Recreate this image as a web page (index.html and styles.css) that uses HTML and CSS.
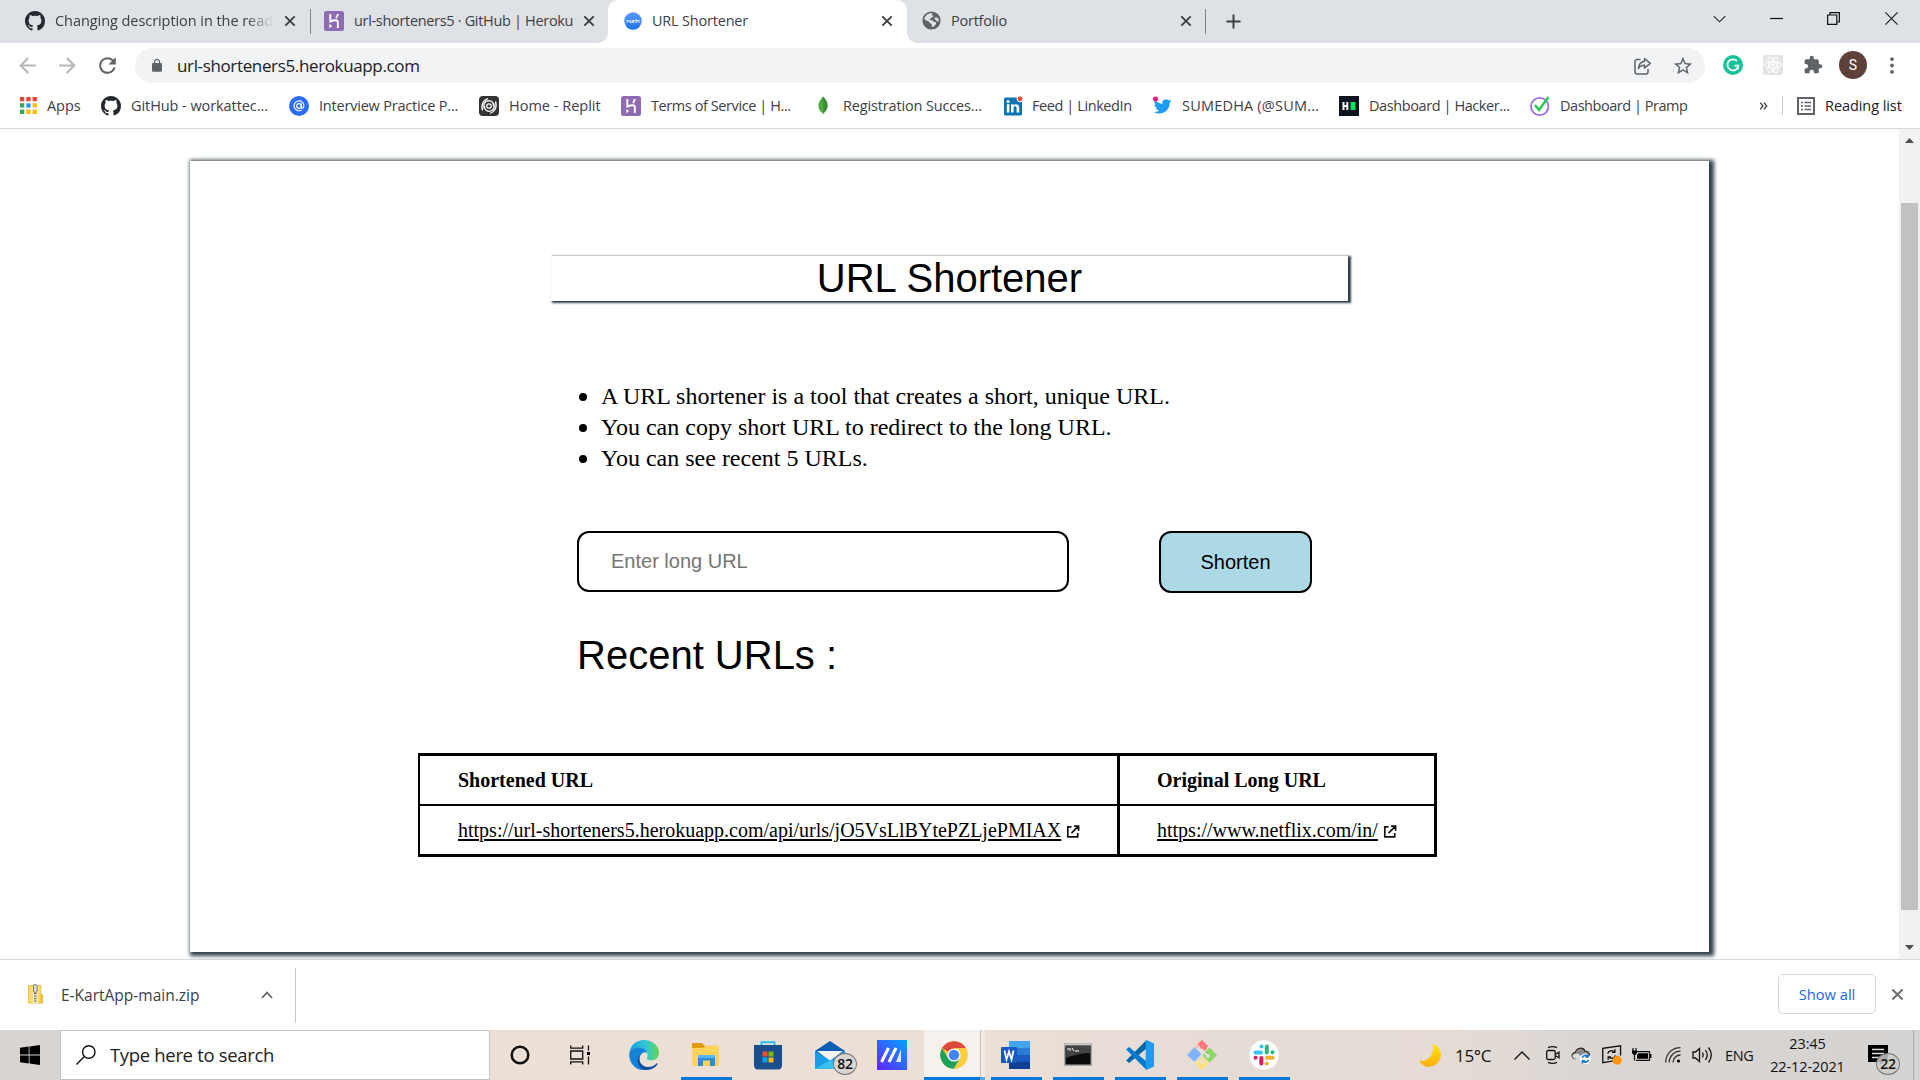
FILE: index.html
```html
<!DOCTYPE html>
<html lang="en">
<head>
<meta charset="utf-8">
<title>URL Shortener</title>
<link rel="stylesheet" href="styles.css">
</head>
<body>
<svg class="defs" aria-hidden="true">
  <symbol id="github" viewBox="0 0 16 16"><path fill="#24292f" d="M8 0C3.58 0 0 3.58 0 8c0 3.54 2.29 6.53 5.47 7.59.4.07.55-.17.55-.38 0-.19-.01-.82-.01-1.49-2.01.37-2.53-.49-2.69-.94-.09-.23-.48-.94-.82-1.13-.28-.15-.68-.52-.01-.53.63-.01 1.08.58 1.23.82.72 1.21 1.87.87 2.33.66.07-.52.28-.87.51-1.07-1.78-.2-3.64-.89-3.64-3.95 0-.87.31-1.59.82-2.15-.08-.2-.36-1.02.08-2.12 0 0 .67-.21 2.2.82.64-.18 1.32-.27 2-.27s1.36.09 2 .27c1.53-1.04 2.2-.82 2.2-.82.44 1.1.16 1.92.08 2.12.51.56.82 1.27.82 2.15 0 3.07-1.87 3.75-3.65 3.95.29.25.54.73.54 1.48 0 1.07-.01 1.93-.01 2.2 0 .21.15.46.55.38A8.01 8.01 0 0 0 16 8c0-4.42-3.58-8-8-8z"/></symbol>
  <symbol id="heroku" viewBox="0 0 20 20"><rect width="20" height="20" rx="2.5" fill="#8f6bb3"/><path fill="none" stroke="#fff" stroke-width="1.9" d="M6.3 3v7.6c2-.9 3.8-1.3 5.500-1.300 1.500 0 2 .8 2 2V17M13.800 3c-.1 1.500-.8 2.900-1.900 4"/><path fill="#fff" d="M5.400 13l2.800 2.100-2.800 2.100z"/></symbol>
  <symbol id="x" viewBox="0 0 12 12"><path fill="none" stroke="#3c4043" stroke-width="1.900" d="M1.300 1.300l9.400 9.400M10.700 1.300l-9.400 9.400"/></symbol>
  <symbol id="outbound" viewBox="0 0 13 13"><path fill="none" stroke="#111" stroke-width="1.700" d="M5 1.800H1.300v10h9.900V8M5 8.200l6.200-6.300M7.600 1.100h4.500v4.700"/></symbol>
</svg>

<div class="screen">
  <header class="tabs">
    <div class="tab t1"><svg class="i20"><use href="#github"/></svg><span class="label fade">Changing description in the read</span><svg class="i12"><use href="#x"/></svg></div>
    <i class="sep"></i>
    <div class="tab t2"><svg class="i20"><use href="#heroku"/></svg><span class="label ls32">url-shorteners5 · GitHub | Heroku</span><svg class="i12"><use href="#x"/></svg></div>
    <div class="tab t3"><svg class="i18" viewBox="0 0 18 18"><defs><linearGradient id="cg" x2="0" y2="1"><stop stop-color="#5b9bf8"/><stop offset="1" stop-color="#1a73e8"/></linearGradient></defs><circle cx="9" cy="9" r="8.700" fill="url(#cg)"/><text x="9" y="11" text-anchor="middle" class="curlc">&gt;url&lt;</text></svg><span class="label ls20">URL Shortener</span><svg class="i12"><use href="#x"/></svg></div>
    <div class="tab t4"><svg class="i19" viewBox="0 0 20 20"><circle cx="10" cy="10" r="9.600" fill="#5f6368"/><path fill="#dee1e6" d="M11 2.200c-1.200 1.500-1 2.500.8 2.700.2 1.300-1.300 1.200-1.800 2.300-.3 1-1.900.6-2 1.800.8 1.300 3.800.3 4.300 2.300 1 .4 2.300.1 2.700 1.300-.4 1.900-2 3.500-4.300 4.600-.9-1.300.3-2.600-1-3.700-1.800-.4-1.600-2.500-3.400-2.700C4.500 10.400 3.500 9 2.300 8.800 3.200 5 6.700 2 11 2.200zM13 7.200c1-.9 3.400-.3 4.200.8.4 1.300.4 2.500 0 3.600-1.800-.9-3.900-2-4.200-4.400z"/></svg><span class="label ls24">Portfolio</span><svg class="i12"><use href="#x"/></svg></div>
    <i class="sep"></i>
    <svg class="plus" viewBox="0 0 16 16"><path stroke="#3c4043" stroke-width="2.100" d="M8 .5v15M.5 8h15"/></svg>
    <div class="winctl">
      <svg class="w1" viewBox="0 0 14 8"><path d="M.8.8L7 7 13.200.8" fill="none" stroke="#222" stroke-width="1.200"/></svg>
      <svg class="w2" viewBox="0 0 13 13"><path d="M0 6.500h13" stroke="#111" stroke-width="1.200"/></svg>
      <svg class="w3" viewBox="0 0 13 13"><path d="M.6 3h9.200v9.400H.6zM3 3V.6h9.400V10H9.900" fill="none" stroke="#111" stroke-width="1.200"/></svg>
      <svg class="w4" viewBox="0 0 13 13"><path d="M.4.4l12.200 12.200M12.600.4L.4 12.600" stroke="#222" stroke-width="1.200"/></svg>
    </div>
  </header>

  <div class="toolbar">
    <svg class="nav back" viewBox="0 0 24 24"><path fill="#b6b8bb" d="M20 11H7.830l5.590-5.590L12 4l-8 8 8 8 1.410-1.410L7.830 13H20z"/></svg>
    <svg class="nav fwd" viewBox="0 0 24 24"><path fill="#b6b8bb" d="M4 11h12.170l-5.590-5.590L12 4l8 8-8 8-1.410-1.410L16.170 13H4z"/></svg>
    <svg class="nav reload" viewBox="0 0 24 24"><path fill="#5f6368" d="M17.650 6.350A7.958 7.958 0 0 0 12 4c-4.420 0-7.990 3.580-7.990 8s3.570 8 7.990 8c3.730 0 6.840-2.550 7.730-6h-2.080A5.990 5.990 0 0 1 12 18c-3.310 0-6-2.690-6-6s2.690-6 6-6c1.660 0 3.140.69 4.220 1.780L13 11h7V4z"/></svg>
    <div class="omnibox">
      <svg class="lock" viewBox="0 0 24 24"><path fill="#5f6368" d="M18 8h-1V6c0-2.760-2.240-5-5-5S7 3.240 7 6v2H6c-1.100 0-2 .9-2 2v10c0 1.100.9 2 2 2h12c1.100 0 2-.9 2-2V10c0-1.100-.9-2-2-2zM9 8V6c0-1.660 1.340-3 3-3s3 1.340 3 3v2z"/></svg>
      <span class="url">url-shorteners5.herokuapp.com</span>
      <svg class="share" viewBox="0 0 18 18"><path fill="none" stroke="#5f6368" stroke-width="1.500" stroke-linejoin="round" d="M7 2.500H3.500a2 2 0 0 0-2 2V15a2 2 0 0 0 2 2h9a2 2 0 0 0 2-2v-3M11 1.500l5.800 4.800-5.800 4.800V8.300c-3 0-4.800.9-6 3.200.2-4 2.200-6.700 6-7.200z"/></svg>
      <svg class="star" viewBox="0 0 24 24"><path fill="#5f6368" d="M22 9.240l-7.190-.62L12 2 9.190 8.630 2 9.240l5.460 4.730L5.820 21 12 17.270 18.180 21l-1.630-7.030zM12 15.400l-3.760 2.270 1-4.280-3.320-2.880 4.380-.38L12 6.100l1.710 4.040 4.380.38-3.320 2.880 1 4.280z"/></svg>
    </div>
    <svg class="gram" viewBox="0 0 20 20"><circle cx="10" cy="10" r="10" fill="#15c39a"/><path fill="none" stroke="#fff" stroke-width="1.800" d="M14 6.200a5.500 5.500 0 1 0 1.400 4.500h-4M14.900 10.700v3.800"/></svg>
    <svg class="react" viewBox="0 0 20 20"><rect width="20" height="20" rx="1.500" fill="#e4e4e4"/><g fill="none" stroke="#fff" stroke-width="1.100"><ellipse cx="10" cy="10" rx="8.500" ry="3.300"/><ellipse cx="10" cy="10" rx="8.500" ry="3.300" transform="rotate(60 10 10)"/><ellipse cx="10" cy="10" rx="8.500" ry="3.300" transform="rotate(120 10 10)"/></g><circle cx="10" cy="10" r="1.700" fill="#fff"/></svg>
    <svg class="puzzle" viewBox="0 0 24 24"><path fill="#5f6368" d="M20.500 11H19V7c0-1.100-.9-2-2-2h-4V3.500C13 2.120 11.880 1 10.500 1S8 2.120 8 3.500V5H4c-1.100 0-1.990.9-1.990 2v3.800H3.500c1.490 0 2.700 1.210 2.700 2.700s-1.210 2.700-2.700 2.700H2V20c0 1.100.9 2 2 2h3.800v-1.500c0-1.490 1.210-2.700 2.700-2.700s2.700 1.210 2.700 2.700V22H17c1.100 0 2-.9 2-2v-4h1.500c1.380 0 2.500-1.120 2.500-2.500S21.880 11 20.500 11z"/></svg>
    <span class="avatar">S</span>
    <svg class="dots" viewBox="0 0 4 18"><g fill="#5f6368"><circle cx="2" cy="2.200" r="2"/><circle cx="2" cy="9" r="2"/><circle cx="2" cy="15.800" r="2"/></g></svg>
  </div>

  <nav class="bookmarks">
    <div class="bm b1"><svg class="i17" viewBox="0 0 17 17"><g fill="#ea4335"><path d="M0 0h4.300v4.300H0zM6.300 0h4.300v4.300H6.300zM12.600 0h4.300v4.300h-4.300z"/></g><path fill="#34a853" d="M0 6.300h4.300v4.300H0zM0 12.600h4.300v4.300H0z"/><path fill="#2a93f4" d="M6.300 6.300h4.300v4.300H6.300z"/><path fill="#fbbc04" d="M6.300 12.600h4.300v4.300H6.300zM12.600 6.300h4.300v4.300h-4.300zM12.600 12.600h4.300v4.300h-4.300z"/></svg><span class="ls08">Apps</span></div>
    <div class="bm b2"><svg class="i20"><use href="#github"/></svg><span class="ls08">GitHub - workattec...</span></div>
    <div class="bm b3"><svg class="i20" viewBox="0 0 20 20"><circle cx="10" cy="10" r="10" fill="#2a6df4"/><circle cx="10" cy="10" r="2.300" fill="none" stroke="#fff" stroke-width="1.200"/><path fill="none" stroke="#fff" stroke-width="1.100" d="M12.500 7.500l-.3 3.700c0 1.600 2.700 1.500 2.700-1.700A4.900 4.900 0 1 0 12.600 14"/></svg><span class="ls20">Interview Practice P...</span></div>
    <div class="bm b4"><svg class="i20" viewBox="0 0 20 20"><rect width="20" height="20" rx="4" fill="#333"/><g fill="none" stroke="#fff"><circle cx="10" cy="10" r="2.200" stroke-width="1.300"/><path stroke-width="1.300" d="M5.500 13c-2-4 .3-8.200 4.200-8.400 3.500 0 5.200 2.800 4.700 5.600M14.500 7c2 4-.3 8.200-4.200 8.400-3.500 0-5.200-2.800-4.700-5.600M3.500 14.500C1.500 8 5 3.500 9 2.600M16.500 5.500c2 6.500-1.500 11-5.500 11.900"/></g></svg><span>Home - Replit</span></div>
    <div class="bm b5"><svg class="i20"><use href="#heroku"/></svg><span class="ls40">Terms of Service | H...</span></div>
    <div class="bm b6"><svg class="i20" viewBox="0 0 20 20"><path fill="#4faa41" d="M10 .5c6 6.200 6.200 12 .4 16.800L10.200 19h-.5l-.2-1.700C3.800 12.500 4.300 6.500 10 .5z"/><path fill="#3b8e38" d="M10 .5c6 6.200 6.200 12 .4 16.800z"/></svg><span class="ls16">Registration Succes...</span></div>
    <div class="bm b7"><svg class="i20" viewBox="0 0 20 20"><rect y="1.500" width="18" height="18" rx="1.500" fill="#0a73b1"/><g fill="#fff"><path d="M2.800 8.300h2.600v8.300H2.800zM7 8.300h2.500v1.200c1.600-2.300 5.700-1.700 5.700 2.100v5h-2.600v-4.400c0-2.600-3-2.400-3 0v4.400H7z"/><circle cx="4.100" cy="5.600" r="1.500"/></g><circle cx="16" cy="2.800" r="3" fill="#f5483b" stroke="#fff"/></svg><span class="ls40">Feed | LinkedIn</span></div>
    <div class="bm b8"><svg class="i20" viewBox="0 0 24 24"><path fill="#1d9bf0" transform="translate(1 2) scale(.88)" d="M23.950 4.570a10 10 0 0 1-2.820.77 4.960 4.960 0 0 0 2.160-2.720c-.95.56-2 .96-3.130 1.190a4.920 4.920 0 0 0-8.380 4.480C7.690 8.100 4.070 6.130 1.640 3.160a4.930 4.930 0 0 0 1.520 6.570 4.900 4.900 0 0 1-2.230-.61v.06a4.920 4.920 0 0 0 3.950 4.830 5 5 0 0 1-2.210.08 4.940 4.940 0 0 0 4.600 3.420A9.870 9.870 0 0 1 0 19.540a13.990 13.990 0 0 0 7.560 2.210c9.050 0 14-7.500 14-13.980 0-.21 0-.42-.02-.63a9.940 9.940 0 0 0 2.410-2.570z"/><circle cx="3" cy="3.500" r="3" fill="#f91880"/></svg><span class="ls-w">SUMEDHA (@SUM...</span></div>
    <div class="bm b9"><svg class="i20" viewBox="0 0 20 20"><path fill="#0e141e" d="M0 0h20v20H0z"/><path fill="#fff" d="M3.500 6h2v3h1.800V6h2v8h-2v-3H5.500v3h-2z"/><path fill="#05e35e" d="M11.500 6h5v8h-5z"/></svg><span class="ls40">Dashboard | Hacker...</span></div>
    <div class="bm b10"><svg class="i20" viewBox="0 0 20 20"><circle cx="9.700" cy="10.500" r="8.700" fill="none" stroke="#9b6fe0" stroke-width="1.800"/><path fill="none" stroke="#22cc55" stroke-width="2.500" d="M5 9l4 5 9.500-13"/></svg><span class="ls46">Dashboard | Pramp</span></div>
    <svg class="more" viewBox="0 0 8 8"><path fill="none" stroke="#3c4043" stroke-width="1.300" d="M.7.7L3.500 4 .7 7.300M4.400.7L7.200 4 4.400 7.300"/></svg>
    <i class="bsep"></i>
    <svg class="rlist" viewBox="0 0 18 18"><rect x="1" y="1" width="16" height="16" fill="none" stroke="#5f6368" stroke-width="2"/><path stroke="#5f6368" stroke-width="1.500" d="M4 5.500h2M7.500 5.500H14M4 9h2M7.500 9H14M4 12.500h2M7.500 12.500H14"/></svg>
    <span class="ls08 rl">Reading list</span>
  </nav>

  <div class="viewport">
    <main class="page">
      <section class="card">
        <h1 class="title">URL Shortener</h1>
        <ul class="notes">
          <li>A URL shortener is a tool that creates a short, unique URL.</li>
          <li>You can copy short URL to redirect to the long URL.</li>
          <li>You can see recent 5 URLs.</li>
        </ul>
        <form class="form">
          <input class="field" type="text" placeholder="Enter long URL">
          <button class="submit" type="button">Shorten</button>
        </form>
        <h2 class="recent">Recent URLs :</h2>
        <table class="urls">
          <thead><tr><th class="c1">Shortened URL</th><th class="c2">Original Long URL</th></tr></thead>
          <tbody><tr><td class="c1"><a class="link">https://url-shorteners5.herokuapp.com/api/urls/jO5VsLlBYtePZLjePMIAX</a><svg class="out"><use href="#outbound"/></svg></td><td class="c2"><a class="link">https://www.netflix.com/in/</a><svg class="out"><use href="#outbound"/></svg></td></tr></tbody>
        </table>
      </section>
    </main>
    <aside class="scrollbar">
      <svg class="arr" viewBox="0 0 9 5"><path fill="#505050" d="M0 5L4.500 0 9 5z"/></svg>
      <div class="thumb"></div>
      <svg class="arr" viewBox="0 0 9 5"><path fill="#505050" d="M0 0l4.500 5L9 0z"/></svg>
    </aside>
  </div>

  <div class="downloads">
    <div class="dl">
      <svg class="zip" viewBox="0 0 15 20"><path fill="#e8bb3a" d="M13 10h2v9.500h-4z"/><path fill="#fbdb6a" stroke="#e8c047" d="M.5 1.500h12.300v17.500H.5z"/><path fill="#fff" d="M4.800 1h5v18h-5z" opacity=".6"/><path stroke="#777" stroke-width="2.600" stroke-dasharray="1.300 1.200" d="M7.300 9v10"/><rect x="5.500" y=".5" width="3.600" height="8" rx="1.500" fill="#ddd" stroke="#777"/></svg>
      <span class="dlname">E-KartApp-main.zip</span>
      <svg class="chev" viewBox="0 0 12 8"><path fill="none" stroke="#5f6368" stroke-width="1.800" d="M1 7l5-5.500L11 7"/></svg>
    </div>
    <button class="showall">Show all</button>
    <svg class="dlx"><use href="#x"/></svg>
  </div>

  <footer class="taskbar">
    <div class="start"><svg class="i20" viewBox="0 0 20 20"><path d="M0 2.800l8.700-1.200v8H0zM9.500 1.500L20 0v9.600H9.500zM0 10.500h8.700v8L0 17.300zM9.500 10.500H20V20L9.500 18.500z"/></svg></div>
    <div class="search"><svg class="i20" viewBox="0 0 20 20"><g fill="none" stroke="#111" stroke-width="1.400"><circle cx="12.800" cy="7" r="6.200"/><path d="M8.300 11.500L.5 19.500"/></g></svg><span class="stext">Type here to search</span></div>
    <div class="task cort"><svg class="i20" viewBox="0 0 20 20"><circle cx="10" cy="10" r="8.300" fill="none" stroke="#111" stroke-width="2.500"/></svg></div>
    <div class="task tview"><svg class="i20" viewBox="0 0 20 20"><g fill="none" stroke="#111" stroke-width="1.300"><path d="M.7 6h12v8h-12zM.7.500v2.600h12V.500M.7 19.500v-2.600h12v2.600M18.500.500v5M18.500 11.500v8"/></g><path d="M17 7h3v3h-3z"/></svg></div>
    <div class="task"><svg class="i30" viewBox="0 0 30 30"><defs><linearGradient id="e1" x2="1"><stop stop-color="#1b9de2"/><stop offset=".55" stop-color="#30c6d6"/><stop offset="1" stop-color="#62d64f"/></linearGradient></defs><path fill="url(#e1)" d="M.3 13C1.500 5 7.500 0 15 0c8.500 0 15 6 15 12.500 0 5-3.500 7.800-7.500 7.800-3.500 0-5.500-1.300-4.500-2.600C20 15 17.500 10.500 13 9.500c-5-1-10 .5-12.700 3.500z"/><path fill="#1482d8" d="M.2 14c1-4.500 6.200-7.300 12-6 3 .6 5.200 2.500 5.800 4.500-2.500-1-5.200.2-6.700 3-2.200 4.500.2 10 6.200 14.200C7.500 32 .2 24 .2 14z"/><path fill="#0c4fa0" d="M11.500 14.500c-3.500 5 .5 12.500 7.500 12.500 3.500 0 6-1 8.200-3.300 1-.8 1.600 0 1 1-2.500 3.500-7 5.600-12.200 5.200C8.500 28 6 19.500 11.500 14.500z"/></svg></div>
    <div class="task on"><svg class="i30" viewBox="0 0 30 30"><path fill="#e19c0b" d="M1 3h10l3 3v5H1z"/><path fill="#ffd35c" d="M1 8h11l3-2.500h13V26H1z"/><path fill="#2f8bd8" d="M7 15h17v11h-5v-5.500h-7V26H7z"/><path fill="#5cb5ef" d="M7 15h17v3H7z"/></svg></div>
    <div class="task"><svg class="i30" viewBox="0 0 30 30"><path fill="none" stroke="#24bff2" stroke-width="1.900" d="M8.500 7V2.200h13V7"/><path fill="#1a4f8e" d="M1 5h28v20c0 3-1.500 4.500-4 4.500H5c-2.500 0-4-1.500-4-4.500z"/><path fill="#f25022" d="M9.500 11.500h5v5h-5z"/><path fill="#7fba00" d="M15.500 11.500h5v5h-5z"/><path fill="#00a4ef" d="M9.500 17.500h5v5h-5z"/><path fill="#ffb900" d="M15.500 17.500h5v5h-5z"/></svg></div>
    <div class="task mail"><svg class="i30" viewBox="0 0 30 30"><path fill="#0a5fb4" d="M0 11L15 1l15 10v8H0z"/><path fill="#f4f4f4" d="M2 11h26L15 21z"/><path fill="#1b9ee8" d="M0 11l15 9.500L30 11v18H0z"/><path fill="#35c1f3" d="M0 29h30L15 20z"/></svg><span class="badge">82</span></div>
    <div class="task"><svg class="i30" viewBox="0 0 30 30"><defs><linearGradient id="m1" x1="0" y1="1" x2="1" y2="0"><stop stop-color="#6422ff"/><stop offset="1" stop-color="#00a5ff"/></linearGradient></defs><path fill="url(#m1)" d="M0 0h30v30H0z"/><path stroke="#fff" stroke-width="3" d="M4.500 22L11.500 8M12 22l7-14"/><path fill="#fff" d="M19 22L24 9v13z" opacity=".85"/></svg></div>
    <div class="task on active"><svg class="i28" viewBox="0 0 28 28"><circle cx="14" cy="14" r="13.700" fill="#fcc934"/><path fill="#dd4b3e" d="M14 14L2.100 7.100A13.700 13.700 0 0 1 25.900 7.200H14z"/><path fill="#1fa15d" d="M2.100 7.100A13.700 13.700 0 0 0 14 27.700l6-10.400L14 14 8.100 17.300z"/><path fill="#ffcd40" d="M14 7.300h11.900A13.700 13.700 0 0 1 14 27.700l6-10.400z"/><circle cx="14" cy="14" r="6.600" fill="#fff"/><circle cx="14" cy="14" r="5.300" fill="#4285f4"/></svg></div>
    <div class="task on"><svg class="i30" viewBox="0 0 30 30"><path fill="#41a5ee" d="M8 1h21v7H8z"/><path fill="#2b7cd3" d="M8 8h21v7H8z"/><path fill="#185abd" d="M8 15h21v7H8z"/><path fill="#103f91" d="M8 22h21v7H8z"/><rect y="7" width="16" height="16" rx="1" fill="#185abd"/><path fill="none" stroke="#fff" stroke-width="1.800" d="M3.500 10.500l2 9L8 11.500l2.500 8 2-9"/></svg></div>
    <div class="task on"><svg class="i30" viewBox="0 0 30 30"><path fill="#0b0b0b" stroke="#aaa" stroke-width="1.500" d="M1.700 3.700h26.600v21.600H1.700z"/><path fill="#ccc" d="M2 3.500h26v2H2z"/><path fill="#444" d="M2.500 6h25v7c-9 0-17 2-25 5z"/><path stroke="#fff" fill="none" d="M4 9h2M7 8v3M9 8l2 3M12 11h4"/></svg></div>
    <div class="task on"><svg class="i30" viewBox="0 0 30 30"><path fill="#0065a9" d="M1.200 20.500L21.500 0v8.500L4 23z"/><path fill="#007acc" d="M1.200 9.500L4 7l17.500 14.500V30z"/><path fill="#1f9cf0" d="M21.500 0L29 3.500v23L21.500 30c-.8-.5-.8-1-.8-2V2c0-1 0-1.500.8-2z"/></svg></div>
    <div class="task on"><svg class="i30" viewBox="0 0 30 30"><path fill="#ff7b7b" d="M15 0l6.300 6.300-4.300 4.300-6.700-6z"/><path fill="#ff7b7b" d="M8.700 6.200L15 0l5 9-3.500 2.500z"/><path fill="#80b3ff" d="M0 15l7.500-7.700 7 7-7.200 7.400z"/><path fill="#87d764" d="M22.500 7.500L30 15l-7.500 7.500-7.300-7.200z"/><path fill="#ffe178" d="M15 16l6.500 7.200L15 30l-6.500-6.800z"/><path fill="none" stroke="#eaded7" stroke-width="1.800" d="M10 5l5 5.500V23M15 11l6 5"/><g fill="#eaded7"><circle cx="15" cy="11" r="2"/><circle cx="15" cy="22" r="2"/><circle cx="21" cy="16" r="2"/></g></svg></div>
    <div class="task on"><svg class="i30" viewBox="0 0 30 30"><circle cx="15" cy="15" r="14.700" fill="#fff"/><g stroke-width="4" stroke-linecap="round"><path stroke="#36c5f0" d="M6.500 12.500H12M12.500 6.500h.1"/><path stroke="#2eb67d" d="M17.800 6.500v6M23.500 12.300h.1"/><path stroke="#ecb22e" d="M18 17.700h5.700M17.700 23.500h.1"/><path stroke="#e01e5a" d="M12.300 18v5.500M6.500 17.700h.1"/></g></svg></div>

    <div class="tray">
      <svg class="moon" viewBox="0 0 22 23"><defs><linearGradient id="mo" x2="0" y2="1"><stop stop-color="#ffe600"/><stop offset="1" stop-color="#ffad12"/></linearGradient></defs><path fill="url(#mo)" d="M14 0c9 3.500 10.500 13.500 4 19.500C12.500 24.500 4 24 0 16.500c9 2.500 15.500-6 14-16.500z"/></svg>
      <span class="temp">15°C</span>
      <svg class="up" viewBox="0 0 16 9"><path fill="none" stroke="#111" stroke-width="1.300" d="M.5 8.500L8 1l7.500 7.500"/></svg>
      <svg class="cam" viewBox="0 0 14 18"><g fill="none" stroke="#111" stroke-width="1.300"><rect x=".7" y="4.500" width="8.500" height="9" rx="1.500"/><path d="M9.500 8.200l3.500-2v5.600l-3.500-2M2 1.700Q6.500-.3 11 1.700M2 16.300q4.500 2 9 0"/></g></svg>
      <svg class="cloud" viewBox="0 0 21 19"><path fill="#8a8a8a" stroke="#222" stroke-width="1.100" d="M5 13C1.500 13-.2 9.500 2 7.500 3 6.500 4 6.500 4.500 6.500 5.500 1 13 0 14.800 5c3-.3 5 1.500 4.700 5.500"/><path fill="#ddd" d="M1.500 10C3 6.500 8 6.500 10 10l3-1v4H5C3 13 1.800 12 1.500 10z"/><circle cx="15" cy="13" r="5.600" fill="#fff"/><path fill="none" stroke="#1473c8" stroke-width="1.500" d="M11.700 12a3.500 3.500 0 0 1 6-1.500M18.300 14a3.500 3.500 0 0 1-6 1.500M18 8v3h-3M12 18v-3h3"/></svg>
      <svg class="sync" viewBox="0 0 21 21"><path fill="none" stroke="#111" stroke-width="1.400" d="M12 16.700L.8 18.500v-15L19.500.900V11"/><path fill="none" stroke="#111" stroke-width="1.400" d="M6 9a4 4 0 0 1 7-1.500M14 11a4 4 0 0 1-7 1.500M13.500 4.500v3.200h-3M6.500 15.500v-3h3"/><circle cx="15.800" cy="16" r="4.800" fill="#ff950a"/></svg>
      <svg class="batt" viewBox="0 0 20 14"><path fill="none" stroke="#111" stroke-width="1.200" d="M4 3.700h13.500v8.600H4M2.500 7v5.500M1 0v3M4 0v3"/><path d="M0 2.500h5V5L3.500 7h-2L0 5zM6.500 5.300h9.500v5.500H5V7zM18 6h1.500v4H18z"/></svg>
      <svg class="wifi" viewBox="0 0 16 16"><g fill="none" stroke="#333" stroke-width="1.300"><path d="M.7 15.500C.7 7 7 .7 15.500.7M4.200 15.500c0-6.300 5-11.300 11.300-11.300M8 15.500c0-4.200 3.300-7.500 7.500-7.500"/></g><circle cx="13.500" cy="14" r="1.600"/></svg>
      <svg class="vol" viewBox="0 0 21 18"><g fill="none" stroke="#111" stroke-width="1.300"><path d="M1 6v6h2.500L7.500 15.500v-13L3.500 6zM10.500 6.500q1.500 2.500 0 5M13.500 4q3.500 5 0 10M16.500 1.500q5.500 7.500 0 15"/></g></svg>
      <span class="lang">ENG</span>
      <div class="clock"><span>23:45</span><span class="date">22-12-2021</span></div>
      <div class="notif"><svg class="nico" viewBox="0 0 20 20"><path d="M0 0h20v17h-4.500L12 20v-3H0z"/><path stroke="#ddd" stroke-width="1.300" d="M4 4.500h12M4 8.500h12M4 12.500h8"/></svg><span class="badge nb">22</span></div>
      <i class="edge"></i>
    </div>
  </footer>
</div>
</body>
</html>
```
FILE: styles.css
```css
* { box-sizing: border-box; }
body { margin: 0; background: #fff; font-family: "Open Sans", sans-serif; font-size: 14.5px; color: #3c4043; }
.defs { display: none; }
svg { display: block; flex: none; overflow: visible; }
.screen { width: 1920px; height: 1080px; display: flex; flex-direction: column; overflow: hidden; }
.i12 { width: 12px; height: 12px; }
.i17 { width: 17px; height: 17px; }
.i18 { width: 18px; height: 18px; }
.i19 { width: 19px; height: 19px; }
.i20 { width: 20px; height: 20px; }
.i28 { width: 28px; height: 28px; }
.i30 { width: 30px; height: 30px; }
.ls08 { letter-spacing: -0.07px; }
.ls16 { letter-spacing: -0.15px; }
.ls20 { letter-spacing: -0.2px; }
.ls24 { letter-spacing: -0.24px; }
.ls32 { letter-spacing: -0.32px; }
.ls40 { letter-spacing: -0.41px; }
.ls46 { letter-spacing: -0.47px; }
.ls-w { letter-spacing: 0.2px; }

.tabs { height: 43px; background: #dee1e6; display: flex; align-items: center; }
.tab { height: 43px; display: flex; align-items: center; padding-bottom: 2px; white-space: nowrap; }
.label { flex: 1; margin-left: 10px; overflow: hidden; }
.fade { letter-spacing: -0.06px; margin-right: 11px; -webkit-mask-image: linear-gradient(90deg, #000 88%, transparent); mask-image: linear-gradient(90deg, #000 88%, transparent); }
.t1 { width: 310px; padding-left: 25px; padding-right: 14px; }
.t2 { width: 297px; padding-left: 13px; padding-right: 13px; }
.t3 { width: 299px; padding-left: 16px; padding-right: 14px; background: #fff; border-radius: 10px 10px 0 0; position: relative; }
.t3::before, .t3::after { content: ""; position: absolute; bottom: 0; width: 10px; height: 10px; }
.t3::before { left: -10px; background: radial-gradient(circle at 0 0, transparent 9.5px, #fff 10px); }
.t3::after { right: -10px; background: radial-gradient(circle at 100% 0, transparent 9.5px, #fff 10px); }
.t4 { width: 298px; padding-left: 15px; padding-right: 13px; }
.curlc { font: bold 6px "Liberation Sans", sans-serif; fill: #fff; }
.sep { width: 1px; height: 25px; background: #80868b; }
.plus { width: 15px; height: 15px; margin-left: 20px; }
.winctl { margin-left: auto; display: flex; align-items: center; height: 37px; align-self: flex-start; padding-right: 22px; }
.w1 { width: 13px; height: 8px; margin-right: 44px; }
.w2 { width: 13px; height: 13px; margin-right: 44px; }
.w3 { width: 13px; height: 13px; margin-right: 45px; }
.w4 { width: 13px; height: 13px; }

.toolbar { height: 44px; display: flex; align-items: center; padding-left: 15px; }
.nav { width: 25px; height: 25px; }
.fwd { margin-left: 15px; }
.reload { margin-left: 15px; }
.omnibox { width: 1570px; height: 35px; margin: 1px 0 0 15px; border-radius: 18px; background: #f1f3f4; display: flex; align-items: center; padding: 0 11px 0 14px; }
.lock { width: 16px; height: 15px; }
.url { margin-left: 12px; flex: 1; font-size: 17px; letter-spacing: -0.36px; color: #202124; }
.share { width: 19px; height: 18px; margin-right: 20px; }
.star { width: 22px; height: 22px; }
.gram { width: 20px; height: 20px; margin-left: 18px; }
.react { width: 20px; height: 20px; margin-left: 20px; }
.puzzle { width: 20px; height: 20px; margin-left: 20px; }
.avatar { width: 28px; height: 28px; margin-left: 16px; border-radius: 50%; background: #5d4037; color: #fff; text-align: center; font: 14px/28px Roboto, sans-serif; }
.dots { width: 4px; height: 17px; margin-left: 23px; }

.bookmarks { height: 42px; padding: 0 0 4px 20px; border-bottom: 1px solid #d5d7da; display: flex; align-items: center; white-space: nowrap; }
.bm { display: flex; align-items: center; gap: 10px; }
.b1 { width: 81px; }
.b2 { width: 188px; }
.b3 { width: 190px; }
.b4 { width: 142px; }
.b5 { width: 192px; }
.b6 { width: 191px; }
.b7 { width: 149px; gap: 8px; }
.b8 { width: 186px; gap: 9px; }
.b9 { width: 191px; }
.b10 { width: 229px; }
.more { width: 9px; height: 8px; }
.bsep { width: 1px; height: 19px; margin: 0 14px; background: #c6c8cb; }
.rlist { width: 18px; height: 18px; margin-right: 10px; }
.rl { color: #202124; }

.viewport { height: 830px; display: flex; overflow: hidden; }
.page { width: 1899px; height: 830px; padding: 32px 0 0 190px; overflow: hidden; }
.card { width: 1519px; height: 791px; padding-top: 95px; background: #fff; box-shadow: 2px 1.500px 4px 2.500px #2f404a; color: #000; }
.title { width: 797px; height: 45px; margin: 0 0 0 361px; text-align: center; font: 40px/45px "Liberation Sans", sans-serif; box-shadow: 2px 1px 2px 1.300px #2f404a; }
.notes { margin: 80px 0 0 361px; padding: 0 0 0 50px; list-style: none; font: 24px/31px "Liberation Serif", serif; }
.notes li { display: flex; align-items: center; }
.notes li::before { content: ""; width: 8px; height: 8px; margin: 1px 14px 0 -22px; border-radius: 50%; background: #000; }
.form { display: flex; margin: 57px 0 0 387px; }
.field { width: 492px; height: 61px; padding: 0 32px 1px; border: 2px solid #000; border-radius: 12px; outline: none; background: #fff; font: 20px "Liberation Sans", sans-serif; }
.field::placeholder { color: #757575; opacity: 1; }
.submit { width: 153px; height: 62px; margin-left: 90px; padding: 0; border: 2px solid #000; border-radius: 12px; background: #add8e6; color: #000; font: 20px "Liberation Sans", sans-serif; }
.recent { margin: 40px 0 0 387px; font: 40px/45px "Liberation Sans", sans-serif; }
.urls { width: 1019px; height: 104px; margin: 75px 0 0 228px; border: solid #000; border-width: 3px 3px 3px 2px; border-spacing: 0; table-layout: fixed; font: 20px/24px "Liberation Serif", serif; }
.urls th, .urls td { height: 48px; padding: 0 0 1px 38px; text-align: left; vertical-align: middle; }
.urls th { height: 50px; padding-bottom: 0; border-bottom: 2px solid #000; }
.urls .c1 { width: 700px; border-right: 3px solid #000; }
.urls .c2 { width: 314px; padding-left: 37px; }
.link { text-decoration: underline; text-decoration-thickness: 1.500px; text-underline-offset: 2px; }
.out { display: inline-block; width: 14px; height: 13px; margin-left: 5px; vertical-align: -1px; }
.scrollbar { width: 21px; background: #f1f1f1; display: flex; flex-direction: column; align-items: center; padding: 9px 0; }
.arr { width: 9px; height: 5px; }
.thumb { width: 17px; height: 707px; margin: 60px 0 auto; background: #c1c1c1; }

.downloads { height: 71px; border-top: 1px solid #d5d7da; display: flex; align-items: center; }
.dl { width: 296px; height: 55px; padding-left: 28px; border-right: 1px solid #c6c8cb; display: flex; align-items: center; }
.zip { width: 15px; height: 20px; margin-top: -3px; }
.dlname { margin-left: 18px; width: 200px; font-size: 15.500px; }
.chev { width: 12px; height: 8px; }
.showall { width: 98px; height: 40px; margin-left: 1482px; margin-bottom: 3px; padding: 0; border: 1px solid #d5d7da; border-radius: 5px; background: #fff; color: #1a67e8; font: 500 14.700px "Open Sans", sans-serif; }
.dlx { width: 13px; height: 13px; margin: 0 0 2px 15px; opacity: .75; }

.taskbar { height: 50px; display: flex; align-items: center; background: linear-gradient(90deg, #d8d4d1 0, #d8d4d1 60px, #ecdfd6 490px, #ecdfd7 950px, #e4dbd5 1300px, #e6dcd5 1420px, #d8d5d3 1640px, #d5d3d1 1920px); color: #111; }
.start { width: 60px; padding-left: 20px; }
.search { width: 430px; height: 50px; padding: 0 0 1px 15px; border: 1px solid #c4c4c4; background: #fff; display: flex; align-items: center; gap: 14px; }
.stext { font-size: 18.500px; letter-spacing: -0.33px; color: #222; }
.task { width: 62px; height: 50px; display: flex; align-items: center; justify-content: center; position: relative; }
.cort { width: 60px; }
.tview { width: 63px; padding-right: 3px; }
.on::after { content: ""; position: absolute; left: 6px; bottom: 0; width: 51px; height: 3px; background: #0078d7; }
.active { background: linear-gradient(90deg, transparent 1px, #f7f1ed 1px, #f7f1ed 57px, #c9c0ba 57px, #c9c0ba 58px, #f3ebe6 58px); }
.active::after { left: 1px; width: 61px; background: linear-gradient(90deg, #0078d7 56px, #5aa9e6 56px); }
.badge { position: absolute; left: 34px; top: 23px; width: 24px; height: 22px; border: 1px solid #777; border-radius: 50%; background: #d8d5d2; font: 600 14px/20px "Open Sans", sans-serif; letter-spacing: -0.3px; text-align: center; color: #111; }
.tray { width: 625px; height: 50px; display: flex; align-items: center; }
.moon { width: 22px; height: 23px; margin-left: 124px; }
.temp { width: 37px; margin-left: 14px; font-size: 17px; letter-spacing: -0.3px; white-space: nowrap; }
.up { width: 16px; height: 9px; margin-left: 22px; }
.cam { width: 14px; height: 18px; margin-left: 16px; }
.cloud { width: 20px; height: 19px; margin-left: 11px; }
.sync { width: 20px; height: 20px; margin-left: 11px; }
.batt { width: 20px; height: 14px; margin-left: 10px; margin-bottom: 1px; }
.wifi { width: 16px; height: 16px; margin-left: 13px; }
.vol { width: 21px; height: 18px; margin-left: 11px; }
.lang { width: 30px; margin-left: 12px; letter-spacing: -0.4px; }
.clock { width: 77px; margin-left: 14px; display: flex; flex-direction: column; align-items: center; line-height: 23px; font-size: 14.500px; letter-spacing: -0.1px; }
.notif { position: relative; margin-left: 22px; width: 20px; height: 20px; }
.nb { left: 8px; top: 8px; background: rgba(205, 203, 201, .85); }
.edge { width: 1px; height: 50px; margin-left: 25px; background: #aaa; }
```
